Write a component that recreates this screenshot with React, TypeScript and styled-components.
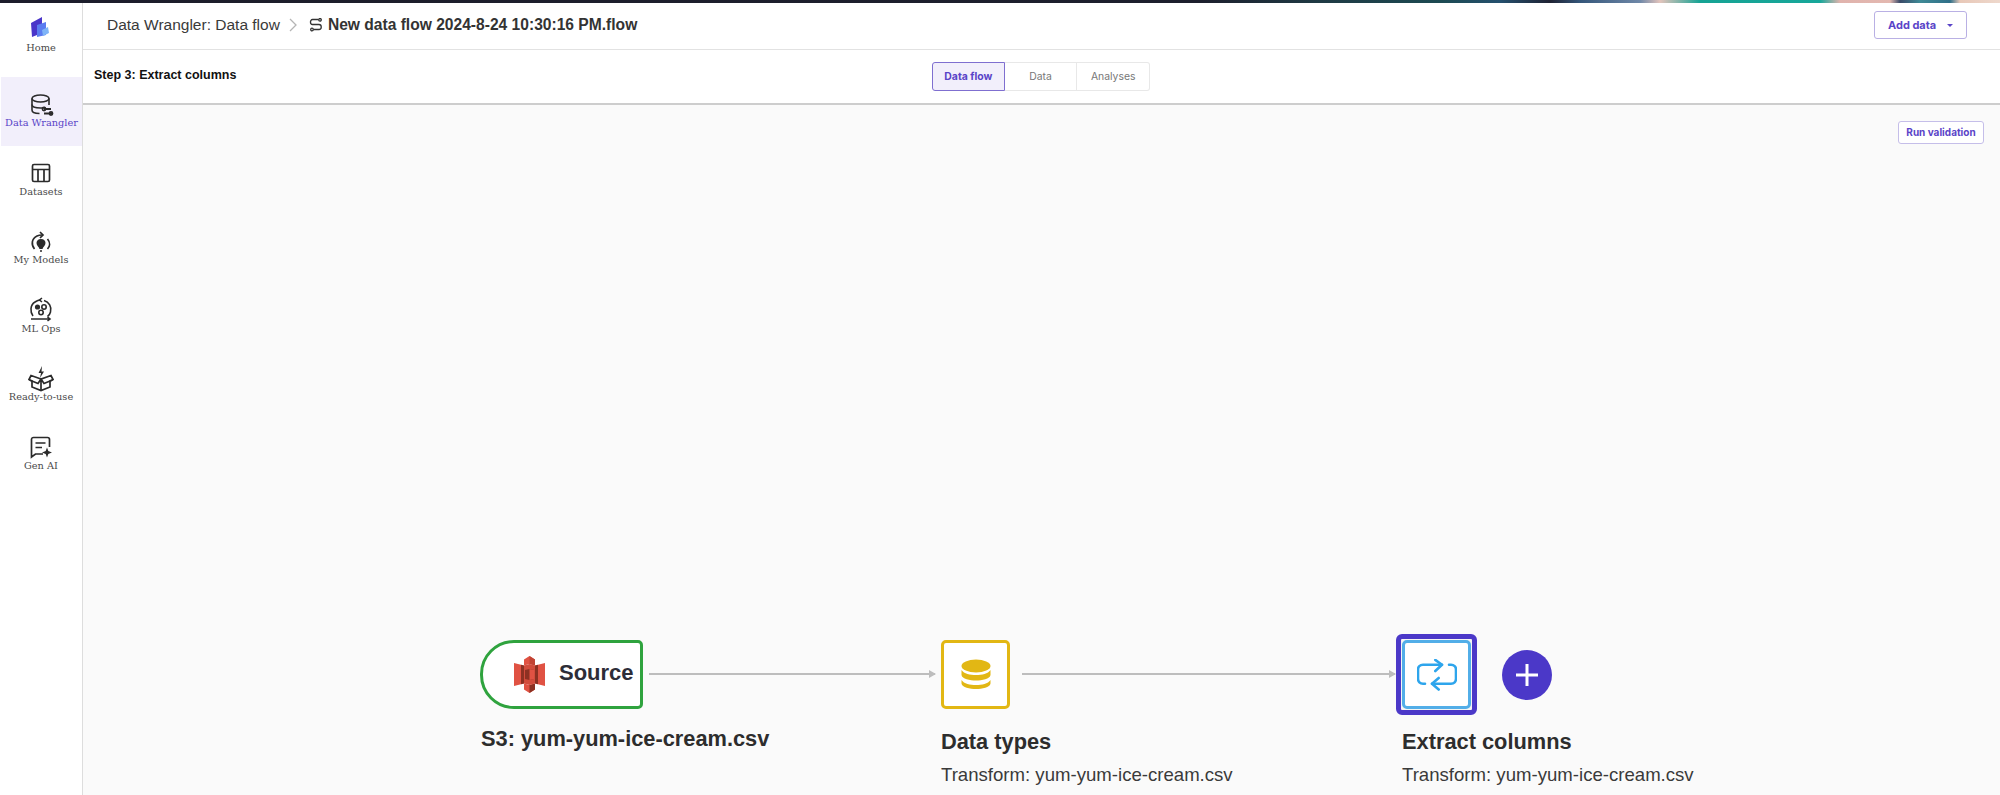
import React from "react";
import styled, { createGlobalStyle } from "styled-components";

const GlobalStyle = createGlobalStyle`
  html, body {
    margin: 0;
    padding: 0;
    height: 100%;
    overflow: hidden;
    background: #ffffff;
  }
  #root {
    height: 100%;
  }
  * {
    box-sizing: border-box;
  }
`;

const HomeIcon = () => (
  <svg width="24" height="24" viewBox="0 0 24 24">
    <path d="M2 8 L13 2 L13 12 L9 12 L8 20 L3 22 Z" fill="#4a35c9" />
    <path d="M8 10 L17 7 L17 20 L8 22 Z" fill="#5b7cf0" />
    <path d="M13 15 L19 12 L20 18 L14 21 Z" fill="#7fb4f7" />
  </svg>
);

const WranglerIcon = () => (
  <svg width="24" height="24" viewBox="0 0 24 24" fill="none" stroke="#2b2b2b" strokeWidth="1.6">
    <ellipse cx="10.5" cy="5.5" rx="8.5" ry="3.5" />
    <path d="M2 5.5 V17 C2 19 5 20.5 9.5 20.5" />
    <path d="M2 11.5 C2 13.5 5.5 15 10.5 15 C12 15 14 14.8 15 14.4" />
    <path d="M19 5.5 V12" />
    <path d="M14 16 H21 M14 20.5 H22" strokeWidth="1.8" />
    <circle cx="14" cy="16" r="1.6" />
    <circle cx="21" cy="20.5" r="1.6" />
  </svg>
);

const DatasetsIcon = () => (
  <svg width="24" height="24" viewBox="0 0 24 24" fill="none" stroke="#2b2b2b" strokeWidth="1.7">
    <rect x="3.5" y="3.5" width="17" height="17" rx="1.5" />
    <path d="M3.5 8.5 H20.5 M9 8.5 V20.5 M15 8.5 V20.5" />
  </svg>
);

const ModelsIcon = () => (
  <svg width="24" height="24" viewBox="0 0 24 24" fill="none" stroke="#2b2b2b" strokeWidth="1.7">
    <path d="M5.5 19 C2 15 2.5 8.5 8 6 C9.5 5.3 11 5 13 5" />
    <path d="M18.5 9 C21.5 12.5 21 16.5 18.5 19" />
    <path d="M11 2 L14 5 L11 8" />
    <path
      d="M12 9 C15 9 16.5 11 16.5 13 C16.5 15.5 14 17 13.5 19 H10.5 C10 17 7.5 15.5 7.5 13 C7.5 11 9 9 12 9 Z"
      fill="#2b2b2b"
      stroke="none"
    />
    <path d="M11 21 H13" />
  </svg>
);

const OpsIcon = () => (
  <svg width="26" height="26" viewBox="0 0 26 26" fill="none" stroke="#2b2b2b" strokeWidth="1.6">
    <path d="M5 19 C2 15 2 8 7 5 C9 3.5 11 3 13 3" />
    <path d="M16 3.5 C21 5 24 10 22.5 15 C22 17 21 18.5 19.5 19.5" />
    <path d="M14 1 L11.5 3 L14 5" />
    <path d="M3 22 H21 M19.5 20 L22 22 L19.5 24" />
    <circle cx="9.5" cy="10" r="2.6" fill="#2b2b2b" stroke="none" />
    <circle cx="16" cy="10" r="2.2" />
    <circle cx="13" cy="15.5" r="2.2" />
  </svg>
);

const ReadyIcon = () => (
  <svg width="26" height="26" viewBox="0 0 26 26" fill="none" stroke="#2b2b2b" strokeWidth="1.7">
    <path d="M14 0 L10.5 7 H13 L12 12 L16 5.5 H13.5 Z" fill="#2b2b2b" stroke="none" />
    <path d="M13 13 L3 9.5 L1 13.5 L4 15 V21 L13 24.5 L22 21 V15 L25 13.5 L23 9.5 Z" />
    <path d="M13 13 V24.5 M13 13 L10 17.5 L1.5 14 M13 13 L16 17.5 L24.5 14" />
  </svg>
);

const GenAiIcon = () => (
  <svg width="24" height="24" viewBox="0 0 24 24" fill="none" stroke="#2b2b2b" strokeWidth="1.7">
    <path d="M14 19 H6.5 L2.5 22 V4.5 C2.5 3.2 3.3 2.5 4.5 2.5 H18.5 C19.7 2.5 20.5 3.2 20.5 4.5 V12" />
    <path d="M6.5 8 H16.5 M6.5 12.5 H13" />
    <path
      d="M18 12.5 L19.3 16 L23 17.5 L19.3 19 L18 22.5 L16.7 19 L13 17.5 L16.7 16 Z"
      fill="#2b2b2b"
      stroke="none"
    />
  </svg>
);

const FlowFileIcon = () => (
  <svg width="14" height="14" viewBox="0 0 14 14" fill="none" stroke="#333333" strokeWidth="1.3">
    <path d="M3.5 1.5 H9.5 M3.5 1.5 C0.8 1.5 0.8 6.5 3.5 6.5 H10 C13 6.5 13 11.5 10 11.5 H4.5" />
    <circle cx="11" cy="1.8" r="1.3" />
    <circle cx="3" cy="11.5" r="1.3" />
  </svg>
);

const S3Logo = () => (
  <svg width="31" height="37" viewBox="0 0 31 37">
    <path d="M0 7 L10 9.5 V27.5 L0 30 Z" fill="#e05243" />
    <path d="M7 8.7 L10 9.5 V27.5 L7 28.3 Z" fill="#8c3123" />
    <path d="M31 7 L21 9.5 V27.5 L31 30 Z" fill="#e05243" />
    <path d="M24 8.7 L21 9.5 V27.5 L24 28.3 Z" fill="#8c3123" />
    <path d="M10 3.5 L15.5 0 L21 3.5 V9.5 L15.5 8 L10 9.5 Z" fill="#e05243" />
    <path d="M15.5 0 L21 3.5 V9.5 L15.5 8 Z" fill="#c14434" />
    <path d="M10 27.5 L15.5 29 L21 27.5 V33.5 L15.5 37 L10 33.5 Z" fill="#e05243" />
    <path d="M15.5 29 L21 27.5 V33.5 L15.5 37 Z" fill="#8c3123" />
    <path d="M10 9.5 L15.5 8 L21 9.5 V27.5 L15.5 29 L10 27.5 Z" fill="#d24c3c" />
    <path d="M11 14 L15.5 13 L20 14 V23 L15.5 24 L11 23 Z" fill="#8c3123" />
    <path d="M15.5 13 L20 14 V23 L15.5 24 Z" fill="#e05243" />
  </svg>
);

const DatabaseIcon = () => (
  <svg width="32" height="32" viewBox="0 0 32 32" fill="#e2b714">
    <ellipse cx="16" cy="7" rx="14.5" ry="6.5" />
    <path d="M1.5 11 C4 15 10 16 16 16 C22 16 28 15 30.5 11 V16 C30 20 22 21.5 16 21.5 C10 21.5 2 20 1.5 16 Z" />
    <path d="M1.5 21 C4 25 10 26 16 26 C22 26 28 25 30.5 21 V24.5 C30 28.5 22 30 16 30 C10 30 2 28.5 1.5 24.5 Z" />
  </svg>
);

const SwapIcon = () => (
  <svg width="40" height="32" viewBox="0 0 40 32" fill="none" stroke="#2ea5ec" strokeWidth="2.6" strokeLinecap="round" strokeLinejoin="round">
    <path d="M8 24.7 H6 C3 24.7 1 22.7 1 19.7 V10.7 C1 7.7 3 5.7 6 5.7 H25" />
    <path d="M18.3 0.9 L25 5.7 L18.3 12" />
    <path d="M32 5.7 H34 C37 5.7 39 7.7 39 10.7 V19.7 C39 22.7 37 24.7 34 24.7 H15" />
    <path d="M21.7 19 L15 24.7 L21.7 30.5" />
  </svg>
);

const navItems = [
  { label: "Data Wrangler", icon: <WranglerIcon />, active: true },
  { label: "Datasets", icon: <DatasetsIcon /> },
  { label: "My Models", icon: <ModelsIcon /> },
  { label: "ML Ops", icon: <OpsIcon /> },
  { label: "Ready-to-use", icon: <ReadyIcon /> },
  { label: "Gen AI", icon: <GenAiIcon /> },
];

export default function App() {
  return (
    <>
      <GlobalStyle />
      <Page>
        <TopStrip />
        <Shell>
          <Sidebar>
            <HomeItem>
              <HomeIcon />
              <NavLabel>Home</NavLabel>
            </HomeItem>
            {navItems.map((item) => (
              <NavItem key={item.label} $active={item.active}>
                <NavIcon>{item.icon}</NavIcon>
                <NavLabel $active={item.active}>{item.label}</NavLabel>
              </NavItem>
            ))}
          </Sidebar>
          <Main>
            <Header>
              <Crumb>Data Wrangler: Data flow</Crumb>
              <CrumbArrow viewBox="0 0 10 16">
                <path d="M2 2 L8 8 L2 14" />
              </CrumbArrow>
              <FlowFileIcon />
              <FlowName>New data flow 2024-8-24 10:30:16 PM.flow</FlowName>
              <AddData>
                Add data
                <Caret />
              </AddData>
            </Header>
            <SubBar>
              <StepTitle>Step 3: Extract columns</StepTitle>
              <Tabs>
                <Tab $active>Data flow</Tab>
                <Tab>Data</Tab>
                <Tab>Analyses</Tab>
              </Tabs>
            </SubBar>
            <Canvas>
              <RunValidation>Run validation</RunValidation>

              <SourceNode>
                <S3Logo />
                <SourceText>Source</SourceText>
              </SourceNode>
              <NodeCaption $left={481} $top={727}>
                S3: yum-yum-ice-cream.csv
              </NodeCaption>

              <Edge $left={649} $width={286} />
              <TransformNode $left={941} $color="#e2b714">
                <DatabaseIcon />
              </TransformNode>
              <NodeCaption $left={941} $top={730}>
                Data types
              </NodeCaption>
              <NodeDetail $left={941}>Transform: yum-yum-ice-cream.csv</NodeDetail>

              <Edge $left={1022} $width={373} />
              <SelectedRing>
                <TransformNode $color="#52aee8" $inner>
                  <SwapIcon />
                </TransformNode>
              </SelectedRing>
              <NodeCaption $left={1402} $top={730}>
                Extract columns
              </NodeCaption>
              <NodeDetail $left={1402}>Transform: yum-yum-ice-cream.csv</NodeDetail>

              <AddStep>
                <svg width="22" height="22" viewBox="0 0 22 22" stroke="#ffffff" strokeWidth="3">
                  <path d="M11 0 V22 M0 11 H22" />
                </svg>
              </AddStep>
            </Canvas>
          </Main>
        </Shell>
      </Page>
    </>
  );
}

const Page = styled.div`
  display: flex;
  flex-direction: column;
  width: 2000px;
  height: 795px;
  overflow: hidden;
  font-family: "Liberation Sans", Arial, sans-serif;
`;

const TopStrip = styled.div`
  height: 3px;
  flex-shrink: 0;
  background: linear-gradient(
    90deg,
    #1c1d2b 0%,
    #1c1f2d 60%,
    #1f3a44 66%,
    #1c4a52 72%,
    #25506e 75%,
    #1f2233 77.5%,
    #34567a 79%,
    #6f88a8 82%,
    #e3c4bc 83%,
    #16a394 85%,
    #17a79a 91%,
    #e0b3ad 92%,
    #e3b8b0 94.5%,
    #3a4a68 95%,
    #3f8a96 96%,
    #2f6f88 97.5%,
    #e8c8b8 98%,
    #eed8cc 100%
  );
`;

const Shell = styled.div`
  display: flex;
  flex: 1;
  min-height: 0;
`;

const Sidebar = styled.nav`
  width: 83px;
  flex-shrink: 0;
  display: flex;
  flex-direction: column;
  background: #ffffff;
  border-right: 1px solid #dddddd;
`;

const HomeItem = styled.div`
  height: 74px;
  display: flex;
  flex-direction: column;
  align-items: center;
  padding-top: 12px;
  gap: 2px;
`;

const NavItem = styled.div<{ $active?: boolean }>`
  height: 68.6px;
  flex-shrink: 0;
  display: flex;
  flex-direction: column;
  align-items: center;
  padding-top: 16px;
  margin-left: ${({ $active }) => ($active ? "1px" : "0")};
  background: ${({ $active }) => ($active ? "#f2effb" : "transparent")};
`;

const NavIcon = styled.div`
  width: 26px;
  height: 23px;
  display: flex;
  align-items: center;
  justify-content: center;
`;

const NavLabel = styled.div<{ $active?: boolean }>`
  font-family: "DejaVu Serif", serif;
  font-size: 9.8px;
  line-height: 14px;
  white-space: nowrap;
  color: ${({ $active }) => ($active ? "#5a44c8" : "#4a4a4a")};
`;

const Main = styled.div`
  flex: 1;
  min-width: 0;
  display: flex;
  flex-direction: column;
`;

const Header = styled.header`
  height: 47px;
  flex-shrink: 0;
  display: flex;
  align-items: center;
  padding: 0 33px 2px 24px;
  background: #ffffff;
  border-bottom: 1px solid #e2e2e2;
`;

const Crumb = styled.span`
  font-size: 15.5px;
  color: #3a3a3a;
`;

const CrumbArrow = styled.svg`
  width: 10px;
  height: 16px;
  margin: 0 11px 0 8px;
  fill: none;
  stroke: #b5b5b5;
  stroke-width: 1.3;
`;

const FlowName = styled.span`
  margin-left: 5px;
  font-size: 15.6px;
  font-weight: 700;
  color: #333333;
`;

const AddData = styled.button`
  margin-left: auto;
  width: 93px;
  height: 28px;
  display: flex;
  align-items: center;
  justify-content: flex-start;
  gap: 11px;
  padding: 0 0 0 13px;
  font-family: Inter, sans-serif;
  font-size: 11px;
  font-weight: 700;
  color: #5a44c8;
  background: #ffffff;
  border: 1px solid #b9b0e4;
  border-radius: 3px;
`;

const Caret = styled.span`
  width: 0;
  height: 0;
  border-style: solid;
  border-width: 3px 3.5px 0 3.5px;
  border-color: #5a44c8 transparent transparent transparent;
`;

const SubBar = styled.div`
  height: 55px;
  flex-shrink: 0;
  position: relative;
  display: flex;
  align-items: center;
  justify-content: center;
  background: #ffffff;
  border-bottom: 2px solid #cdcdcd;
`;

const StepTitle = styled.div`
  position: absolute;
  left: 11px;
  top: 18px;
  font-size: 12.5px;
  font-weight: 700;
  color: #111111;
`;

const Tabs = styled.div`
  display: flex;
  margin-right: 1px;
`;

const Tab = styled.div<{ $active?: boolean }>`
  width: 72.7px;
  height: 29px;
  display: flex;
  align-items: center;
  justify-content: center;
  font-family: Inter, sans-serif;
  font-size: 10.4px;
  font-weight: ${({ $active }) => ($active ? 700 : 400)};
  color: ${({ $active }) => ($active ? "#5a44c8" : "#777777")};
  background: ${({ $active }) => ($active ? "#f2effb" : "#ffffff")};
  border: 1px solid ${({ $active }) => ($active ? "#7f6fd0" : "#e8e8e8")};
  border-left-width: ${({ $active }) => ($active ? "1px" : "0")};
  border-radius: ${({ $active }) => ($active ? "3px 0 0 3px" : "0")};
  &:last-child {
    border-radius: 0 3px 3px 0;
  }
`;

const Canvas = styled.main`
  flex: 1;
  position: relative;
  overflow: hidden;
  background: #fafafa;
`;

const RunValidation = styled.button`
  position: absolute;
  right: 16px;
  top: 16px;
  width: 86px;
  height: 23px;
  padding: 0 0 2px;
  font-family: Inter, sans-serif;
  font-size: 10px;
  font-weight: 700;
  color: #5a44c8;
  background: #ffffff;
  border: 1px solid #c5bee9;
  border-radius: 3px;
`;

/* the flow nodes are placed on a free canvas, page y minus 105 */
const SourceNode = styled.div`
  position: absolute;
  left: 397px;
  top: 535px;
  width: 163px;
  height: 69px;
  display: flex;
  align-items: center;
  gap: 14px;
  padding-left: 31px;
  background: #ffffff;
  border: 3px solid #2fa33e;
  border-radius: 34px 5px 5px 34px;
`;

const SourceText = styled.span`
  margin-bottom: 4px;
  font-size: 22px;
  font-weight: 700;
  color: #2d2d38;
`;

const NodeCaption = styled.div<{ $left: number; $top: number }>`
  position: absolute;
  left: ${({ $left }) => $left - 83}px;
  top: ${({ $top }) => $top - 105}px;
  font-size: 21.8px;
  font-weight: 700;
  line-height: 24px;
  white-space: nowrap;
  color: #2d2d2d;
`;

const NodeDetail = styled.div<{ $left: number }>`
  position: absolute;
  left: ${({ $left }) => $left - 83}px;
  top: 660px;
  font-size: 18.6px;
  line-height: 20px;
  white-space: nowrap;
  color: #3a3a3a;
`;

const Edge = styled.div<{ $left: number; $width: number }>`
  position: absolute;
  left: ${({ $left }) => $left - 83}px;
  top: 568px;
  width: ${({ $width }) => $width}px;
  height: 2px;
  background: #bdbdbd;
  &::after {
    content: "";
    position: absolute;
    right: -1px;
    top: -3.5px;
    border-style: solid;
    border-width: 4.5px 0 4.5px 7px;
    border-color: transparent transparent transparent #bdbdbd;
  }
`;

const TransformNode = styled.div<{ $left?: number; $color: string; $inner?: boolean }>`
  position: ${({ $inner }) => ($inner ? "static" : "absolute")};
  left: ${({ $left }) => ($left ? $left - 83 : 0)}px;
  top: 535px;
  width: 69px;
  height: 69px;
  flex-shrink: 0;
  display: flex;
  align-items: center;
  justify-content: center;
  background: #ffffff;
  border: 3px solid ${({ $color }) => $color};
  border-radius: 5px;
`;

const SelectedRing = styled.div`
  position: absolute;
  left: 1313px;
  top: 529px;
  width: 81px;
  height: 81px;
  display: flex;
  align-items: center;
  justify-content: center;
  background: #f4f4f4;
  border: 5px solid #4b38c8;
  border-radius: 6px;
`;

const AddStep = styled.div`
  position: absolute;
  left: 1419px;
  top: 545px;
  width: 50px;
  height: 50px;
  display: flex;
  align-items: center;
  justify-content: center;
  background: #4b38c8;
  border-radius: 50%;
`;
